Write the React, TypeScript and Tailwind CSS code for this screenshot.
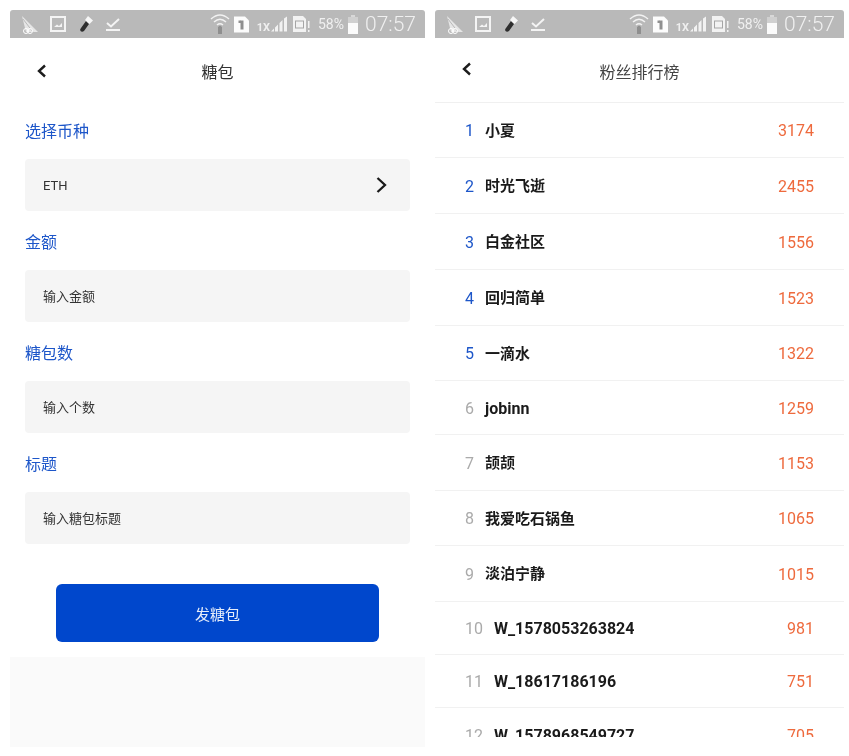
import React from 'react';

const FONT = "font-['Roboto','Noto_Sans_CJK_SC',sans-serif]";

const ranks = [
  { no: 1, name: '小夏', score: 3174, h: 'h-[55px]' },
  { no: 2, name: '时光飞逝', score: 2455, h: 'h-[56px]' },
  { no: 3, name: '白金社区', score: 1556, h: 'h-[56px]' },
  { no: 4, name: '回归简单', score: 1523, h: 'h-[56px]' },
  { no: 5, name: '一滴水', score: 1322, h: 'h-[55px]' },
  { no: 6, name: 'jobinn', score: 1259, h: 'h-[54px]' },
  { no: 7, name: '颉颉', score: 1153, h: 'h-[56px]' },
  { no: 8, name: '我爱吃石锅鱼', score: 1065, h: 'h-[55px]' },
  { no: 9, name: '淡泊宁静', score: 1015, h: 'h-[56px]' },
  { no: 10, name: 'W_1578053263824', score: 981, h: 'h-[53px]' },
  { no: 11, name: 'W_18617186196', score: 751, h: 'h-[53px]' },
  { no: 12, name: 'W_1578968549727', score: 705, h: 'h-[54px]' },
];

const StatusBar = () => (
  <div className="h-[28px] shrink-0 bg-[#b9b9b9] rounded-t-[3px] flex items-center text-white pl-[10px] pr-[9px]">
    {/* left notification icons */}
    <svg width="19" height="19" viewBox="0 0 19 19" className="shrink-0">
      <path d="M2 1 L18 17 L6 17 Z" fill="#e6e6e6" />
      <path d="M3 4 L13 17" stroke="#b9b9b9" strokeWidth="1" />
      <circle cx="6" cy="16" r="2.5" fill="none" stroke="#fff" strokeWidth="1" />
      <circle cx="10" cy="16" r="2.5" fill="none" stroke="#fff" strokeWidth="1" />
    </svg>
    <svg width="16" height="16" viewBox="0 0 16 16" className="ml-[11px] shrink-0">
      <rect x="1" y="1" width="14" height="14" fill="none" stroke="#f4f4f4" strokeWidth="2" />
      <path d="M4 11 L7 8.5 L9 10 L12 7 L12 11 Z" fill="#f4f4f4" />
    </svg>
    <svg width="16" height="18" viewBox="0 0 16 18" className="ml-[12px] shrink-0">
      <path d="M8 6 L11 9 L6 16 Q4 17.5 2.5 16 Q1.5 14.5 3 13 Z" fill="#2e2e2e" />
      <path d="M7 5 L10 1 L15 5.5 L11.5 9 Z" fill="#f6f6f6" />
    </svg>
    <svg width="16" height="16" viewBox="0 0 16 16" className="ml-[11px] shrink-0">
      <path d="M2 7 L6 10.5 L14 3" fill="none" stroke="#f4f4f4" strokeWidth="2" />
      <rect x="1" y="13" width="14" height="2" fill="#f4f4f4" />
    </svg>
    <div className="flex-1" />
    <svg width="20" height="22" viewBox="0 0 20 22" className="shrink-0">
      <g fill="none" stroke="#f2f2f2" strokeWidth="1.5">
        <path d="M1 6 Q10 -2 19 6" />
        <path d="M4 9 Q10 3.5 16 9" />
        <path d="M7 12 Q10 9.5 13 12" />
      </g>
      <path d="M8 14 L10 12.5 L12 14 L12 21 L8 21 Z" fill="#8f8f8f" />
    </svg>
    <svg width="15" height="17" viewBox="0 0 15 16" className="ml-[4px] shrink-0">
      <path d="M0 0 H11 L15 4 V16 H0 Z" fill="#fcfcfc" />
      <rect x="6.5" y="4" width="3" height="9" fill="#8f8f8f" />
      <rect x="4.5" y="4" width="2.5" height="2.5" fill="#8f8f8f" />
    </svg>
    <span className="ml-[8px] mt-[6px] text-[11px] leading-none font-bold text-[#efefef] font-['Roboto',sans-serif]">1X</span>
    <svg width="18" height="17" viewBox="0 0 18 16" className="shrink-0">
      <path d="M1 15 H4 V12 Z" fill="#f2f2f2" />
      <path d="M5 15 V11 L8 8 V15 Z M9.5 15 V6.5 L12.5 3.5 V15 Z M14 15 V2 L17 0 V15 Z" fill="#f2f2f2" />
    </svg>
    <svg width="17" height="17" viewBox="0 0 17 17" className="ml-[5px] shrink-0">
      <path d="M0 0 H10 L13 3 V16 H0 Z" fill="#f2f2f2" />
      <rect x="2.5" y="5" width="8" height="7" fill="none" stroke="#a5a5a5" strokeWidth="1" />
      <rect x="15" y="5" width="1.5" height="7" fill="#f2f2f2" />
      <rect x="15" y="14" width="1.5" height="2" fill="#f2f2f2" />
    </svg>
    <span className="ml-[8px] text-[14px] leading-none text-[#f0f0f0] font-['Roboto',sans-serif]">58%</span>
    <svg width="12" height="19" viewBox="0 0 12 19" className="ml-[3px] shrink-0">
      <rect x="4" y="0" width="4" height="2" fill="#d8d8d8" />
      <rect x="1" y="2" width="10" height="7" fill="#d0d0d0" />
      <rect x="1" y="8" width="10" height="11" fill="#fbfbfb" />
    </svg>
    <span className="ml-[6px] text-[21px] leading-none text-[#f0f0f0] font-['Roboto',sans-serif] font-light">07:57</span>
  </div>
);

const BackIcon = () => (
  <svg width="11" height="14" viewBox="0 0 11 14">
    <path d="M9 1.5 L3 7 L9 12.5" fill="none" stroke="#1c1c1c" strokeWidth="2.4" />
  </svg>
);

const Field = ({ label, placeholder, chevron }: { label: string; placeholder: string; chevron?: boolean }) => (
  <div>
    <div className="h-[31px] flex items-center pt-[2px] text-[16px] leading-none text-[#1d56c9]">{label}</div>
    <div className="mt-[13px] h-[52px] bg-[#f5f5f5] rounded-[4px] flex items-center justify-between pl-[18px] pr-[22px] text-[13px] text-[#333]">
      <span className="pt-[1px]">{placeholder}</span>
      {chevron && (
        <svg width="13" height="18" viewBox="0 0 13 18">
          <path d="M2.5 2 L10 9 L2.5 16" fill="none" stroke="#1a1a1a" strokeWidth="2.3" />
        </svg>
      )}
    </div>
  </div>
);

const RedPacketForm = () => (
  <div className="w-[415px] h-[737px] flex flex-col bg-white">
    <StatusBar />
    <div className="h-[64px] shrink-0 relative flex items-center justify-center text-[16px] text-[#333]">
      <div className="absolute left-[26px] top-[26px]"><BackIcon /></div>
      <span className="mt-[5px]">糖包</span>
    </div>
    <div className="px-[15px] mt-[13px] flex flex-col gap-[15px]">
      <Field label="选择币种" placeholder="ETH" chevron />
      <Field label="金额" placeholder="输入金额" />
      <Field label="糖包数" placeholder="输入个数" />
      <Field label="标题" placeholder="输入糖包标题" />
    </div>
    <button className="mx-[46px] mt-[40px] pt-[4px] h-[58px] shrink-0 rounded-[6px] bg-[#0047cc] text-white/90 text-[15px]">发糖包</button>
    <div className="mt-[15px] flex-1 bg-[#fafafa]" />
  </div>
);

const FanRanking = () => (
  <div className="w-[409px] h-[727px] flex flex-col bg-white overflow-hidden">
    <StatusBar />
    <div className="h-[65px] shrink-0 relative flex items-center justify-center text-[16px] text-[#444] border-b border-[#f0f0f0]">
      <div className="absolute left-[26px] top-[24px]"><BackIcon /></div>
      <span className="mt-[5px]">粉丝排行榜</span>
    </div>
    {ranks.map(r => (
      <div key={r.no} className={`${r.h} shrink-0 flex items-center pl-[30px] pr-[30px] pt-[2px] border-b border-[#f1f1f1] text-[16px]`}>
        <span className={`${r.no < 10 ? 'w-[20px]' : 'w-[29px]'} ${r.no <= 5 ? 'text-[#1d56c9]' : 'text-[#aaaaaa]'}`}>{r.no}</span>
        {/* latin ids render a bit bigger than the chinese names */}
        <span className={`font-bold text-[#1a1a1a] ${/^[\x00-\x7f]+$/.test(r.name) ? 'text-[16px]' : 'text-[15px]'}`}>{r.name}</span>
        <span className="ml-auto text-[#ee6a3d]">{r.score}</span>
      </div>
    ))}
  </div>
);

const App: React.FC = () => (
  <div className={`w-[849px] h-[756px] overflow-hidden bg-white flex gap-[10px] pl-[10px] pt-[10px] blur-[0.4px] ${FONT}`}>
    <RedPacketForm />
    <FanRanking />
  </div>
);

export default App;
